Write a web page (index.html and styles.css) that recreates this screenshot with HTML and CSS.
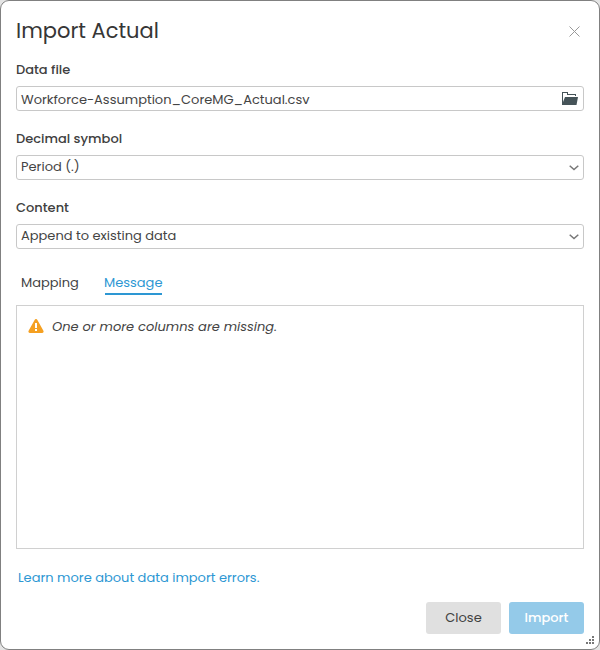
FILE: index.html
```html
<!DOCTYPE html>
<html lang="en">
<head>
<meta charset="utf-8">
<title>Import Actual</title>
<link rel="stylesheet" href="styles.css">
</head>
<body>
<main class="dialog">
  <header class="header">
    <h1 class="title">Import Actual</h1>
    <svg class="close-icon" width="11" height="11" viewBox="0 0 11 11"><path d="M.5.5l10 10M10.5.5l-10 10"/></svg>
  </header>
  <section class="field">
    <label class="label">Data file</label>
    <div class="control control-file"><span>Workforce-Assumption_CoreMG_Actual.csv</span>
      <svg class="folder" width="16" height="13" viewBox="0 0 16 13"><path d="M0 13V0h6v2h8v2h-1V3H5V1H1v9l2-5h13l-1.5 8z"/></svg>
    </div>
  </section>
  <section class="field">
    <label class="label">Decimal symbol</label>
    <div class="control"><span>Period (.)</span>
      <svg class="chevron" width="10" height="6" viewBox="0 0 10 6"><path d="M.7.8L5 4.5 9.3.8"/></svg>
    </div>
  </section>
  <section class="field">
    <label class="label">Content</label>
    <div class="control"><span>Append to existing data</span>
      <svg class="chevron" width="10" height="6" viewBox="0 0 10 6"><path d="M.7.8L5 4.5 9.3.8"/></svg>
    </div>
  </section>
  <nav class="tabs">
    <span class="tab">Mapping</span>
    <span class="tab active">Message</span>
  </nav>
  <section class="panel">
    <svg class="warning" width="16" height="14" viewBox="0 0 16 14"><path class="triangle" d="M6.6.9a1.6 1.6 0 0 1 2.8 0l6 10.8c.6 1.1-.1 2.3-1.3 2.3H1.9C.7 14 0 12.8.6 11.7z"/><path class="mark" d="M7 4h2v5H7zM7 10h2v2H7z"/></svg>
    <em class="notice">One or more columns are missing.</em>
  </section>
  <a class="learn">Learn more about data import errors.</a>
  <footer class="actions">
    <button class="button close"><span>Close</span></button>
    <button class="button import"><span>Import</span></button>
  </footer>
  <svg class="grip" width="8" height="8" viewBox="0 0 8 8"><path d="M6 0h2v2H6zM3 3h2v2H3zM6 3h2v2H6zM0 6h2v2H0zM3 6h2v2H3zM6 6h2v2H6z"/></svg>
</main>
</body>
</html>
```
FILE: styles.css
```css
* { box-sizing: border-box; }
body {
  margin: 0;
  background: #e4e4e4;
  font-family: Poppins, Inter, "Liberation Sans", sans-serif;
  font-size: 13px;
  color: #444;
}
.dialog {
  position: relative;
  display: flex;
  flex-direction: column;
  width: 600px;
  height: 650px;
  padding: 0 15px;
  border: 1px solid #808080;
  border-radius: 9px;
  background: #fff;
  white-space: nowrap;
}
.header { display: flex; justify-content: space-between; height: 57px; }
.title { margin: 14px 0 0; font-size: 21px; line-height: 32px; font-weight: 400; color: #363636; }
.close-icon { margin: 25px 4px 0 0; fill: none; stroke: #999; }
.field { height: 69px; }
.label { display: block; height: 28px; line-height: 24px; font-weight: 500; color: #404040; }
.control {
  display: flex;
  align-items: center;
  justify-content: space-between;
  height: 25px;
  padding: 0 4px 2px;
  border: 1px solid #c8c8c8;
  border-radius: 3px;
}
.control-file { padding: 2px 5px 0 4px; }
.folder { margin-top: -2px; fill: #455358; }
.chevron { margin-top: 3px; fill: none; stroke: #777; stroke-width: 1.5; }
.tabs { display: flex; gap: 25px; height: 40px; padding: 7px 5px 0; }
.tab { position: relative; width: 58px; height: 23px; line-height: 22px; }
.active { color: #2d97d3; }
.active::after { content: ""; position: absolute; left: 1px; right: 0; bottom: 0; height: 2px; background: #2d97d3; }
.panel { display: flex; align-items: flex-start; height: 244px; padding: 11px; border: 1px solid #d0d0d0; }
.warning { margin-top: 2px; }
.triangle { fill: #f5a021; }
.mark { fill: #fff; }
.notice { margin-left: 8px; line-height: 19px; }
.learn { height: 53px; padding: 18px 2px 0; line-height: 22px; color: #2d97d3; }
.actions { display: flex; justify-content: flex-end; gap: 8px; }
.button { width: 75px; height: 32px; padding: 0; border: 0; border-radius: 3px; background: #e0e0e0; color: #404040; font: inherit; }
.import { background: #94cae9; color: #fff; font-weight: 500; }
.grip { position: absolute; right: 5px; bottom: 5px; fill: #777; }
```
